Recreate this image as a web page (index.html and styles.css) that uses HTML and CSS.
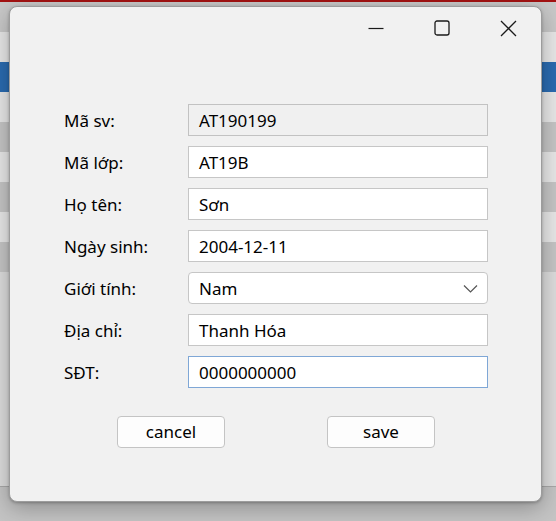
FILE: index.html
```html
<!DOCTYPE html>
<html lang="vi">
<head>
<meta charset="utf-8">
<title>Sinh viên</title>
<link rel="stylesheet" href="styles.css">
</head>
<body>
<div class="backdrop">
  <div class="bg-top"><span></span><span></span><span></span><span></span></div>
  <div class="bg-row light"></div>
  <div class="bg-row selected"></div>
  <div class="bg-row light"></div>
  <div class="bg-row dark"></div>
  <div class="bg-row light"></div>
  <div class="bg-row dark"></div>
  <div class="bg-row light"></div>
  <div class="bg-row dark"></div>
  <div class="bg-empty"></div>
  <div class="bg-footer"></div>
</div>

<div class="dialog">
  <div class="titlebar">
    <div class="cap-btn">
      <svg width="16" height="16" viewBox="0 0 16 16"><path d="M0.5 8.5H15.5" stroke="#1a1a1a" stroke-width="1.2" fill="none"/></svg>
    </div>
    <div class="cap-btn">
      <svg width="16" height="16" viewBox="0 0 16 16"><rect x="1" y="1" width="14" height="14" rx="2" ry="2" stroke="#1a1a1a" stroke-width="1.3" fill="none"/></svg>
    </div>
    <div class="cap-btn">
      <svg width="17" height="17" viewBox="0 0 17 17"><path d="M1 1L16 16M16 1L1 16" stroke="#1a1a1a" stroke-width="1.3" fill="none"/></svg>
    </div>
  </div>

  <div class="form">
    <div class="row">
      <label class="lbl">Mã sv:</label>
      <div class="field readonly">AT190199</div>
    </div>
    <div class="row">
      <label class="lbl">Mã lớp:</label>
      <div class="field">AT19B</div>
    </div>
    <div class="row">
      <label class="lbl">Họ tên:</label>
      <div class="field">Sơn</div>
    </div>
    <div class="row">
      <label class="lbl">Ngày sinh:</label>
      <div class="field">2004-12-11</div>
    </div>
    <div class="row">
      <label class="lbl">Giới tính:</label>
      <div class="field combo">
        <span>Nam</span>
        <svg class="chev" width="15" height="9" viewBox="0 0 15 9"><path d="M1 1.5L7.5 8L14 1.5" stroke="#555" stroke-width="1.2" fill="none"/></svg>
      </div>
    </div>
    <div class="row">
      <label class="lbl">Địa chỉ:</label>
      <div class="field">Thanh Hóa</div>
    </div>
    <div class="row">
      <label class="lbl">SĐT:</label>
      <div class="field focused">0000000000</div>
    </div>
  </div>

  <div class="actions">
    <button class="btn">cancel</button>
    <button class="btn">save</button>
  </div>
</div>
</body>
</html>
```

FILE: styles.css
```css
* { box-sizing: border-box; }

html, body {
  margin: 0;
  padding: 0;
}

body {
  width: 556px;
  height: 521px;
  overflow: hidden;
  position: relative;
  font-family: "Noto Sans", "Open Sans", sans-serif;
  font-size: 17px;
  color: #000;
}

.backdrop {
  display: flex;
  flex-direction: column;
  height: 521px;
  background: #c6c6c6;
}

.bg-top {
  height: 32px;
  background: #c8c8c8;
  border-top: 2px solid #a31212;
  display: flex;
}
.bg-top span {
  height: 0;
}

.bg-row {
  height: 30px;
}
.bg-row.light { background: #e7e7e7; }
.bg-row.dark { background: #c5c5c5; }
.bg-row.selected { background: #2a6bb0; }

.bg-empty {
  flex: 0 0 215px;
  background: #dcdcdc;
  border-bottom: 1px solid #a8a8a8;
}

.bg-footer {
  flex: 1;
  background: #c4c4c4;
}

.dialog {
  position: absolute;
  left: 9px;
  top: 6px;
  width: 533px;
  height: 496px;
  background: #f1f1f1;
  border: 1px solid #9c9c9c;
  border-radius: 8px;
  box-shadow: 0 6px 22px rgba(0, 0, 0, 0.28), 0 1px 3px rgba(0, 0, 0, 0.25);
  display: flex;
  flex-direction: column;
}

.titlebar {
  height: 42px;
  display: flex;
  justify-content: flex-end;
}

.cap-btn {
  width: 66px;
  height: 42px;
  display: flex;
  align-items: center;
  justify-content: center;
}
.cap-btn svg { display: block; }

.form {
  padding: 55px 0 0 54px;
  display: flex;
  flex-direction: column;
  gap: 10px;
}

.row {
  display: flex;
  align-items: center;
  height: 32px;
}

.lbl {
  width: 124px;
  line-height: 1;
}

.field {
  width: 300px;
  height: 32px;
  background: #fff;
  border: 1px solid #c6c6c6;
  padding: 0 10px;
  display: flex;
  align-items: center;
  line-height: 1;
}

.field.readonly {
  background: #f0f0f0;
  border-color: #c2c2c2;
}

.field.focused {
  border-color: #7fa7d6;
}

.field.combo {
  border-radius: 4px;
  justify-content: space-between;
  padding-right: 9px;
}

.chev { display: block; }

.actions {
  display: flex;
  gap: 102px;
  padding: 28px 0 0 107px;
}

.btn {
  width: 108px;
  height: 32px;
  background: #fdfdfd;
  border: 1px solid #c4c4c4;
  border-radius: 4px;
  font-family: "Noto Sans", "Open Sans", sans-serif;
  font-size: 17px;
  color: #000;
  padding: 0 0 2px;
  line-height: 1;
}
```
